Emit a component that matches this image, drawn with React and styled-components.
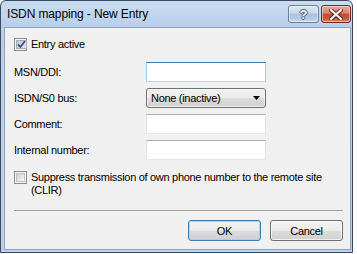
import React from "react";
import styled, { createGlobalStyle } from "styled-components";

const Global = createGlobalStyle`
  html, body { margin: 0; padding: 0; background: #ffffff; }
  body { font-family: "Liberation Sans", Arial, sans-serif; }
  * { box-sizing: border-box; }
`;

const Window = styled.div`
  width: 353px;
  height: 253px;
  border: 1px solid #3b4a5e;
  border-radius: 6px 6px 0 0;
  background: linear-gradient(180deg, #c9dcf1 0px, #b8cfea 26px, #bcd2ec 100%);
  display: flex;
  flex-direction: column;
  overflow: hidden;
`;

const TitleBar = styled.div`
  height: 26px;
  flex: none;
  display: flex;
  align-items: flex-start;
  padding: 0 1px 0 6px;
`;

const Title = styled.div`
  flex: 1;
  height: 26px;
  line-height: 26px;
  font-size: 12px;
  letter-spacing: -0.12px;
  color: #000;
  white-space: nowrap;
`;

const CaptionButtons = styled.div`
  display: flex;
  gap: 2px;
  margin-top: 4px;
`;

const CaptionButton = styled.div`
  width: ${(p) => p.$w}px;
  height: 18px;
  border: 1px solid ${(p) => (p.$red ? "#6f2a22" : "#6a7f99")};
  border-radius: 3px;
  display: flex;
  align-items: center;
  justify-content: center;
  background: ${(p) =>
    p.$red
      ? "linear-gradient(180deg, #e8aa9f 0%, #d7826f 45%, #c24a35 50%, #c65a42 80%, #dc8a70 100%)"
      : "linear-gradient(180deg, #dde8f5 0%, #c6d7ec 45%, #a9c1df 50%, #b4cae6 80%, #cadcf1 100%)"};
  box-shadow: inset 0 0 0 1px rgba(255, 255, 255, 0.45);
`;

const HelpGlyph = styled.span`
  font-family: "Liberation Sans", Arial, sans-serif;
  font-weight: bold;
  font-size: 13px;
  line-height: 13px;
  color: #ffffff;
  text-shadow: -1px 0 #4a5a70, 1px 0 #4a5a70, 0 -1px #4a5a70, 0 1px #4a5a70;
`;

const Client = styled.div`
  flex: 1;
  margin: 0 1px 2px 3px;
  border: 1px solid #8ea3bd;
  background: #f0f0f0;
  padding: 10px 7px 8px 9px;
  display: flex;
  flex-direction: column;
  font-size: 11px;
  letter-spacing: -0.3px;
  color: #000;
`;

const CheckRow = styled.label`
  display: flex;
  align-items: flex-start;
  gap: 4px;
  line-height: 13px;
  margin-top: ${(p) => p.$mt || 0}px;
`;

const Box = styled.span`
  flex: none;
  width: 13px;
  height: 13px;
  border: 1px solid #8e8f8f;
  background: #f4f4f4;
  padding: 1px;
  display: flex;
`;

const BoxInner = styled.span`
  flex: 1;
  border: 1px solid ${(p) => (p.$checked ? "#a9adb3" : "#c4c4c4")};
  background: ${(p) =>
    p.$checked
      ? "linear-gradient(135deg, #c4c8cf 0%, #e4e6ea 100%)"
      : "linear-gradient(135deg, #cfcfcf 0%, #f7f7f7 100%)"};
  display: flex;
  align-items: center;
  justify-content: center;
`;

const CheckText = styled.span`
  padding-top: 0px;
`;

const Form = styled.div`
  display: grid;
  grid-template-columns: 132px 120px;
  row-gap: 6px;
  align-items: center;
  margin-top: 11px;
`;

const Label = styled.span`
  line-height: 20px;
`;

const TextInput = styled.div`
  height: 20px;
  background: #ffffff;
  border: 1px solid;
  border-color: ${(p) =>
    p.$focus
      ? "#3d7bad #a4c9e3 #b7d9ed #a4c9e3"
      : "#abadb3 #e2e3ea #e3e9ef #e2e3ea"};
`;

const Select = styled.div`
  height: 20px;
  border: 1px solid #707070;
  border-radius: 3px;
  background: linear-gradient(180deg, #f2f2f2 0%, #ebebeb 50%, #dddddd 50%, #cfcfcf 100%);
  box-shadow: inset 0 0 0 1px rgba(255, 255, 255, 0.6);
  display: flex;
  align-items: center;
  justify-content: space-between;
  padding: 0 5px 0 4px;
`;

const Separator = styled.div`
  height: 1px;
  background: #a0a0a0;
  margin-top: 13px;
`;

const ButtonRow = styled.div`
  display: flex;
  justify-content: flex-end;
  gap: 9px;
  margin-top: 9px;
`;

const Button = styled.div`
  width: 73px;
  height: 21px;
  border: 1px solid ${(p) => (p.$default ? "#3c7fb1" : "#707070")};
  border-radius: 3px;
  background: linear-gradient(180deg, #f2f2f2 0%, #ebebeb 50%, #dddddd 50%, #cfcfcf 100%);
  box-shadow: inset 0 0 0 1px ${(p) => (p.$default ? "#9fd5f5" : "rgba(255,255,255,0.7)")};
  display: flex;
  align-items: center;
  justify-content: center;
  font-size: 11px;
`;

const Check = () => (
  <svg width="9" height="9" viewBox="0 0 9 9">
    <path d="M1 4.5 L3.5 7 L8 1" fill="none" stroke="#3f4f8a" strokeWidth="1.8" />
  </svg>
);

const Arrow = () => (
  <svg width="7" height="4" viewBox="0 0 7 4">
    <path d="M0 0 H7 L3.5 4 Z" fill="#000" />
  </svg>
);

const CloseX = () => (
  <svg width="14" height="11" viewBox="0 0 14 11">
    <path
      d="M2 1 L12 10 M12 1 L2 10"
      stroke="#5a1f18"
      strokeWidth="4"
      strokeLinecap="square"
    />
    <path d="M2 1 L12 10 M12 1 L2 10" stroke="#ffffff" strokeWidth="2.2" strokeLinecap="square" />
  </svg>
);

export default function App() {
  return (
    <>
      <Global />
      <Window>
        <TitleBar>
          <Title>ISDN mapping - New Entry</Title>
          <CaptionButtons>
            <CaptionButton $w={31}>
              <HelpGlyph>?</HelpGlyph>
            </CaptionButton>
            <CaptionButton $w={30} $red>
              <CloseX />
            </CaptionButton>
          </CaptionButtons>
        </TitleBar>
        <Client>
          <CheckRow>
            <Box>
              <BoxInner $checked>
                <Check />
              </BoxInner>
            </Box>
            <CheckText>Entry active</CheckText>
          </CheckRow>
          <Form>
            <Label>MSN/DDI:</Label>
            <TextInput $focus />
            <Label>ISDN/S0 bus:</Label>
            <Select>
              <span>None (inactive)</span>
              <Arrow />
            </Select>
            <Label>Comment:</Label>
            <TextInput />
            <Label>Internal number:</Label>
            <TextInput />
          </Form>
          <CheckRow $mt={11}>
            <Box>
              <BoxInner />
            </Box>
            <CheckText>
              Suppress transmission of own phone number to the remote site
              <br />
              (CLIR)
            </CheckText>
          </CheckRow>
          <Separator />
          <ButtonRow>
            <Button $default>OK</Button>
            <Button>Cancel</Button>
          </ButtonRow>
        </Client>
      </Window>
    </>
  );
}
